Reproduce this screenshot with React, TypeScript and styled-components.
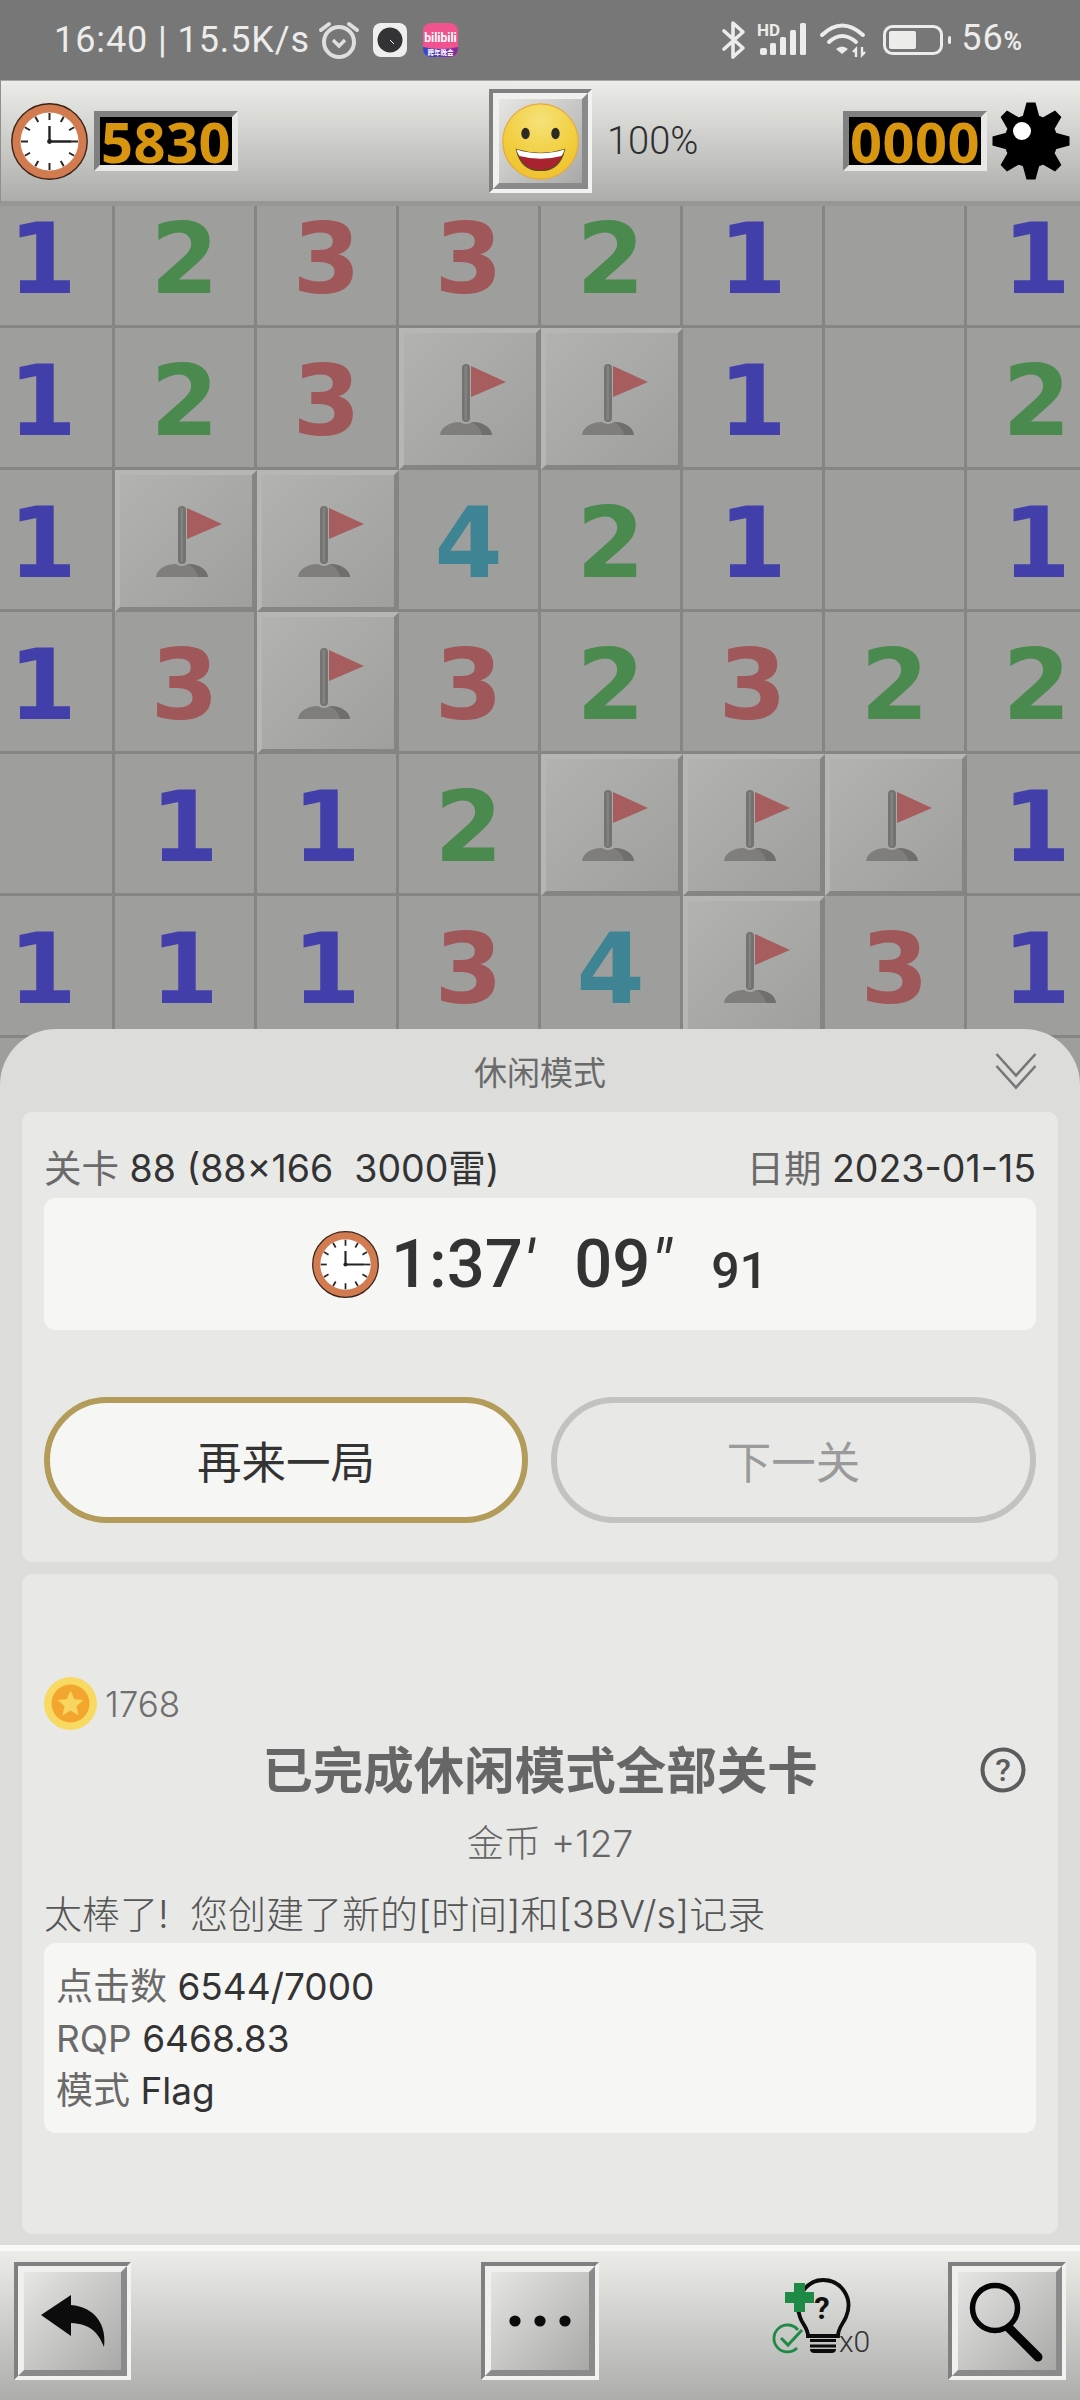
import React from "react";
import styled, { createGlobalStyle } from "styled-components";

const SANS = `Roboto, "Noto Sans CJK SC", "Noto Sans", sans-serif`;
const WIDE = `Inter, "Noto Sans CJK SC", "Noto Sans", sans-serif`;

const Global = createGlobalStyle`
  html, body { margin: 0; padding: 0; background: #777; }
  * { box-sizing: border-box; }
`;

const Page = styled.div`
  width: 1080px;
  height: 2400px;
  display: flex;
  flex-direction: column;
  overflow: hidden;
  font-family: ${SANS};
`;

/* status bar */
const StatusBar = styled.div`
  height: 80px;
  flex: none;
  background: #777777;
  display: flex;
  align-items: center;
  justify-content: space-between;
  padding: 0 57px 0 54px;
  color: #ececea;
`;
const StatusGroup = styled.div`
  display: flex;
  align-items: center;
`;
const StatusText = styled.span<{ $ml?: number }>`
  font-size: 36px;
  font-weight: 400;
  line-height: 40px;
  letter-spacing: 0.9px;
  white-space: pre;
  margin-left: ${(p) => p.$ml ?? 0}px;
`;
const Percent = styled.span`
  font-size: 25px;
  font-weight: 700;
`;
const Icon = styled.svg<{ $ml?: number }>`
  display: block;
  flex: none;
  overflow: visible;
  margin-left: ${(p) => p.$ml ?? 0}px;
`;

/* top toolbar */
const TopBar = styled.div`
  height: 126px;
  flex: none;
  display: grid;
  grid-template-columns: 1fr auto 1fr;
  align-items: center;
  padding: 0 10px;
  background: linear-gradient(180deg, #ecece9 0%, #adadab 100%);
  border-top: 1px solid #a8a8a8;
  border-left: 1px solid #8f8f8f;
  border-bottom: 5px solid #979795;
`;
const BarSide = styled.div`
  display: flex;
  align-items: center;
`;
const Zoom = styled.span`
  margin-left: 15px;
  font-size: 38px;
  font-weight: 300;
  color: #2e2e2e;
  margin-right: auto;
`;
const Counter = styled.div<{ $ml?: number; $mr?: number }>`
  width: 144px;
  height: 60px;
  display: flex;
  align-items: center;
  justify-content: center;
  margin-left: ${(p) => p.$ml ?? 0}px;
  margin-right: ${(p) => p.$mr ?? 0}px;
  border-style: solid;
  border-width: 6px;
  border-color: #808080 #e8e8e6 #e8e8e6 #808080;
  background: #000;
  color: #d8950f;
  font-family: "Open Sans", sans-serif;
  font-weight: 700;
  font-size: 56px;
  line-height: 48px;
  letter-spacing: 0.5px;
  flex: none;
`;
const BevelOuter = styled.div<{ $w: number; $h: number; $ml?: number }>`
  width: ${(p) => p.$w}px;
  height: ${(p) => p.$h}px;
  margin-left: ${(p) => p.$ml ?? 0}px;
  flex: none;
  border-style: solid;
  border-width: 4px;
  border-color: #808080 #f2f2f0 #f2f2f0 #808080;
`;
const BevelInner = styled.div`
  width: 100%;
  height: 100%;
  display: flex;
  align-items: center;
  justify-content: center;
  border-style: solid;
  border-width: 6px;
  border-color: #f0f0ee #8a8a8a #8a8a8a #f0f0ee;
  background: linear-gradient(135deg, #e6e6e4 0%, #a8a8a6 100%);
`;

/* game */
const Game = styled.div`
  position: relative;
  flex: 1;
  min-height: 0;
  overflow: hidden;
  background: #9e9e9c;
`;
const Board = styled.div`
  display: grid;
  grid-template-columns: repeat(8, 142px);
  grid-auto-rows: 142px;
  margin: -20px 0 0 -27px;
  width: 1136px;
`;
const Cell = styled.div<{ $color?: string }>`
  display: flex;
  align-items: center;
  justify-content: center;
  background: #9e9e9c;
  border-right: 3px solid #858583;
  border-bottom: 3px solid #858583;
  color: ${(p) => p.$color ?? "transparent"};
  font-family: "DejaVu Sans", sans-serif;
  font-weight: 700;
  font-size: 98px;
  line-height: 1;
  padding: 6px 0 0 0;
`;
const FlagCell = styled.div`
  display: flex;
  border-style: solid;
  border-width: 5px;
  border-color: #b6b6b4 #858583 #858583 #b6b6b4;
  background: linear-gradient(135deg, #b2b2b0 0%, #9f9f9d 100%);
`;

/* sheet */
const Sheet = styled.div`
  position: absolute;
  top: 823px;
  left: 0;
  right: 0;
  bottom: 0;
  display: flex;
  flex-direction: column;
  padding: 0 22px 11px;
  background: #dcdcda;
  border-radius: 56px 56px 0 0;
`;
const SheetHead = styled.div`
  height: 83px;
  flex: none;
  display: grid;
  grid-template-columns: 1fr auto 1fr;
  align-items: center;
`;
const SheetTitle = styled.div`
  font-size: 33px;
  color: #6a6a6a;
`;
const HeadEnd = styled.div`
  justify-self: end;
  padding-right: 21px;
`;
const Card = styled.div<{ $grow?: boolean; $top: number }>`
  padding: ${(p) => p.$top}px 22px 0;
  background: #e8e8e6;
  border-radius: 10px;
  ${(p) => (p.$grow ? "flex: 1; margin-top: 12px;" : "height: 450px; flex: none;")}
`;
const InfoRow = styled.div`
  height: 62px;
  display: flex;
  align-items: center;
  justify-content: space-between;
  padding-bottom: 4px;
  font-family: ${WIDE};
  font-size: 37.5px;
  color: #333;
  white-space: pre;
`;
const Label = styled.span`
  color: #6a6a6a;
`;
const TimeBox = styled.div`
  height: 132px;
  display: flex;
  align-items: center;
  justify-content: center;
  background: #f6f6f4;
  border-radius: 12px;
  color: #333;
`;
const TimeMain = styled.span<{ $ml?: number }>`
  font-size: 67px;
  font-weight: 500;
  margin-left: ${(p) => p.$ml ?? 0}px;
  line-height: 1;
`;
const Prime = styled.span`
  font-style: italic;
  font-weight: 400;
`;
const TimeSmall = styled.span`
  font-size: 50px;
  font-weight: 500;
  margin-left: 40px;
  padding-top: 14px;
  line-height: 1;
`;
const Actions = styled.div`
  display: grid;
  grid-template-columns: 484px 485px;
  justify-content: space-between;
  margin-top: 67px;
`;
const Pill = styled.button<{ $primary?: boolean }>`
  height: 126px;
  border-radius: 63px;
  border: 6px solid ${(p) => (p.$primary ? "#b39c5a" : "#c2c2c0")};
  background: ${(p) => (p.$primary ? "#f6f6f4" : "#e8e8e6")};
  color: ${(p) => (p.$primary ? "#333" : "#9a9a9a")};
  font-family: ${SANS};
  font-size: 44.5px;
  padding: 0 0 2px;
`;
const CoinRow = styled.div`
  height: 53px;
  display: flex;
  align-items: center;
  gap: 8px;
  font-family: ${WIDE};
  font-size: 35px;
  font-weight: 300;
  color: #6f6f6f;
`;
const ResultRow = styled.div`
  height: 72px;
  display: grid;
  grid-template-columns: 1fr auto 1fr;
  align-items: center;
`;
const ResultTitle = styled.div`
  font-size: 50.5px;
  font-weight: 700;
  color: #666;
  white-space: nowrap;
  padding-bottom: 6px;
`;
const HelpSlot = styled.div`
  justify-self: end;
  padding: 0 10px 1px 0;
`;
const Reward = styled.div`
  height: 82px;
  display: flex;
  align-items: center;
  justify-content: center;
  padding: 0 0 4px 20px;
  font-family: ${WIDE};
  font-size: 37px;
  font-weight: 300;
  color: #666;
  white-space: pre;
`;
const Note = styled.div`
  height: 59px;
  display: flex;
  align-items: center;
  padding-bottom: 5px;
  font-family: ${WIDE};
  font-size: 38px;
  font-weight: 300;
  color: #555;
  white-space: pre;
`;
const Details = styled.div`
  height: 190px;
  padding: 18px 12px 0;
  background: #f6f6f4;
  border-radius: 12px;
  font-family: ${WIDE};
  color: #333;
  font-size: 37px;
`;
const DetailLine = styled.div`
  height: 52px;
  line-height: 52px;
  white-space: pre;
`;

/* bottom */
const BottomBar = styled.div`
  height: 155px;
  flex: none;
  display: flex;
  align-items: flex-start;
  padding: 11px 14px 0;
  border-top: 6px solid #f8f8f6;
  background: linear-gradient(180deg, #ecece9 0%, #adadab 100%);
`;

const ClockIcon = ({ size }: { size: number }) => (
  <Icon width={size} height={size} viewBox="0 0 77 77">
    <circle cx="38.5" cy="38.5" r="37.7" fill="#d27b50" stroke="#3a2418" strokeWidth="1.4" />
    <circle cx="38.5" cy="38.5" r="29" fill="#fff" />
    {Array.from({ length: 12 }, (_, i) => (
      <line
        key={i}
        x1="38.5"
        y1="10"
        x2="38.5"
        y2={i % 3 === 0 ? 17 : 16}
        stroke="#2a2725"
        strokeWidth="2"
        transform={`rotate(${i * 30} 38.5 38.5)`}
      />
    ))}
    <path d="M38.5 23V38.5H60" fill="none" stroke="#222" strokeWidth="2.4" />
    <circle cx="38.5" cy="38.5" r="2.4" fill="#222" />
  </Icon>
);

const SmileIcon = () => (
  <Icon width="77" height="77" viewBox="0 0 77 77">
    <defs>
      <radialGradient id="smile" cx="50%" cy="22%" r="85%">
        <stop offset="0" stopColor="#f6e27a" />
        <stop offset="0.6" stopColor="#f2cd3c" />
        <stop offset="1" stopColor="#eebe2c" />
      </radialGradient>
    </defs>
    <circle cx="38.5" cy="38.5" r="37.7" fill="url(#smile)" stroke="#e6aa40" strokeWidth="1.2" />
    <ellipse cx="23.5" cy="30.5" rx="4.2" ry="5.8" fill="#2c2a22" />
    <ellipse cx="53.5" cy="30.5" rx="4.2" ry="5.8" fill="#2c2a22" />
    <path d="M14.5 46.5Q38.5 54 62.5 46.5Q58 67.5 38.5 67.5Q19 67.5 14.5 46.5Z" fill="#a8232f" stroke="#5d4a22" strokeWidth="1.2" />
    <path d="M14.5 46.5Q38.5 54 62.5 46.5Q61.5 50.5 59.5 53Q38.5 58.5 17.5 53Q15.5 50.5 14.5 46.5Z" fill="#fff" />
  </Icon>
);

const MineIcon = () => (
  <Icon width="78" height="78" viewBox="-39 -39 78 78">
    <circle r="26.5" fill="#000" />
    {Array.from({ length: 8 }, (_, i) => (
      <path key={i} d="M-4.5 -38.5H4.5L9 -22H-9Z" fill="#000" transform={`rotate(${i * 45})`} />
    ))}
    <circle cx="-9" cy="-10" r="9" fill="#fff" />
  </Icon>
);

const Flag = () => (
  <svg width="132" height="132" viewBox="0 0 132 132" style={{ display: "block" }}>
    <rect x="58" y="31" width="8" height="58" rx="4" fill="#737371" />
    <rect x="60.5" y="33" width="2.5" height="54" fill="#828280" />
    <path d="M67 33L102 49L67 64Z" fill="#a75c5e" />
    <path d="M36 102C37 93 47 89 56 89Q62 93 68 89C77 89 87 93 88 102Z" fill="#7f7e7c" />
    <path d="M68 89C77 89 87 93 88 102H78C77 96 73 92 68 89Z" fill="#706f6d" />
  </svg>
);

const colors: Record<string, string> = { "1": "#423faa", "2": "#4a8a4e", "3": "#a05759", "4": "#3f8494" };
const board = ["12332101", "123FF102", "1FF42101", "13F32322", "0112FFF1", "11134F31"];

const Bluetooth = () => (
  <Icon width="25" height="38" viewBox="0 0 25 38">
    <path d="M3 10L22 27L12 36V2L22 11L3 28" fill="none" stroke="#ececea" strokeWidth="3.6" strokeLinejoin="round" strokeLinecap="round" />
  </Icon>
);
const Signal = () => (
  <Icon $ml={11} width="50" height="34" viewBox="0 0 50 34">
    <text x="0" y="12.5" fontFamily="Roboto, sans-serif" fontWeight="700" fontSize="17" fill="#ececea">HD</text>
    <rect x="3" y="25" width="7" height="7" rx="2" fill="#ececea" />
    <rect x="13" y="20" width="6" height="12" rx="1.5" fill="#ececea" />
    <rect x="23" y="14" width="6" height="18" rx="1.5" fill="#ececea" />
    <rect x="33" y="7" width="6" height="25" rx="1.5" fill="#ececea" />
    <rect x="43" y="0" width="6" height="32" rx="1.5" fill="#ececea" />
  </Icon>
);
const Wifi = () => (
  <Icon $ml={13} width="48" height="34" viewBox="0 0 48 34">
    <path d="M2 12Q22 -7 43 12" fill="none" stroke="#ececea" strokeWidth="4" strokeLinecap="round" />
    <path d="M9 19Q22 7 36 19" fill="none" stroke="#ececea" strokeWidth="4" strokeLinecap="round" />
    <path d="M16 26L22 31L28 26Q22 21 16 26Z" fill="#ececea" />
    <path d="M36 34V26L33 29M42 24V32L45 29" fill="none" stroke="#ececea" strokeWidth="2.4" />
  </Icon>
);
const Battery = () => (
  <Icon $ml={15} width="68" height="30" viewBox="0 0 68 30">
    <rect x="1.5" y="1.5" width="57" height="27" rx="8" fill="none" stroke="#ececea" strokeWidth="3" />
    <rect x="6" y="6" width="27" height="18" rx="2" fill="#ececea" />
    <rect x="65" y="11" width="3" height="8" rx="1.5" fill="#ececea" />
  </Icon>
);
const Alarm = () => (
  <Icon $ml={9} width="40" height="38" viewBox="0 0 40 38">
    <circle cx="20" cy="21" r="15" fill="none" stroke="#dedede" strokeWidth="4" />
    <path d="M14 19L20 25L26 19" fill="none" stroke="#dedede" strokeWidth="3.4" />
    <path d="M2 9L10 3M38 9L30 3" stroke="#dedede" strokeWidth="4" strokeLinecap="round" />
  </Icon>
);
const AppDial = () => (
  <Icon $ml={14} width="34" height="34" viewBox="0 0 34 34">
    <rect width="34" height="34" rx="8" fill="#efefef" />
    <circle cx="17" cy="17" r="12.5" fill="#333335" />
    <path d="M17 17L21 21" stroke="#fff" strokeWidth="1" />
  </Icon>
);
const AppBili = () => (
  <Icon $ml={16} width="35" height="34" viewBox="0 0 35 34">
    <defs>
      <linearGradient id="band" x1="0" x2="1" y1="0" y2="0">
        <stop offset="0" stopColor="#2f48c8" />
        <stop offset="1" stopColor="#8c2a96" />
      </linearGradient>
      <clipPath id="biliClip">
        <rect width="35" height="34" rx="8" />
      </clipPath>
    </defs>
    <g clipPath="url(#biliClip)">
      <rect width="35" height="34" fill="#f0538e" />
      <path d="M0 24Q17.5 28 35 24V34H0Z" fill="url(#band)" />
    </g>
    <text x="17.5" y="19" textAnchor="middle" fontFamily="Roboto, sans-serif" fontWeight="700" fontSize="12" fill="#fff">bilibili</text>
    <text x="17.5" y="32" textAnchor="middle" fontFamily="'Noto Sans CJK SC', sans-serif" fontWeight="700" fontSize="6.5" fill="#fff">跨年晚会</text>
  </Icon>
);

const Chevrons = () => (
  <Icon width="42" height="36" viewBox="0 0 42 36">
    <path d="M1.5 1L21 22.5L40.5 1M1.5 13L21 34.5L40.5 13" fill="none" stroke="#777" strokeWidth="2.6" />
  </Icon>
);
const Coin = () => (
  <Icon width="53" height="53" viewBox="0 0 53 53">
    <circle cx="26.5" cy="26.5" r="26.5" fill="#f8da63" />
    <circle cx="26.5" cy="26.5" r="19" fill="#f3a62e" />
    <path d="M26.5 13.5L30.3 22.2L39.5 23L32.5 29.2L34.6 38.5L26.5 33.6L18.4 38.5L20.5 29.2L13.5 23L22.7 22.2Z" fill="#f8d55f" />
  </Icon>
);
const Help = () => (
  <Icon width="46" height="46" viewBox="0 0 46 46">
    <circle cx="23" cy="23" r="20.5" fill="none" stroke="#5c5c5c" strokeWidth="4" />
    <text x="23" y="34" textAnchor="middle" fontFamily="Roboto, sans-serif" fontWeight="500" fontSize="32" fill="#5c5c5c">?</text>
  </Icon>
);
const Undo = () => (
  <Icon width="70" height="58" viewBox="0 0 70 58">
    <path d="M3 23L33 3V13C57 15 69 33 66 55C60 40 52 32 33 31V44Z" fill="#0c0c0c" />
  </Icon>
);
const Dots = () => (
  <Icon width="64" height="14" viewBox="0 0 64 14">
    <circle cx="7" cy="7" r="5.6" fill="#0c0c0c" />
    <circle cx="32" cy="7" r="5.6" fill="#0c0c0c" />
    <circle cx="57" cy="7" r="5.6" fill="#0c0c0c" />
  </Icon>
);
const Magnifier = () => (
  <Icon width="80" height="80" viewBox="0 0 80 80">
    <circle cx="28" cy="27" r="22.5" fill="none" stroke="#050505" strokeWidth="5.5" />
    <path d="M42 47L71 76" stroke="#050505" strokeWidth="9" strokeLinecap="round" />
  </Icon>
);
const Hint = () => (
  <Icon $ml={161} width="120" height="115" viewBox="0 0 120 115">
    <path d="M48 74C48 66 42 62 40 55C33 36 47 18 63 18C81 18 94 36 86 55C83 62 78 66 78 74Z" fill="none" stroke="#0c0c0c" strokeWidth="3.8" />
    <text x="62" y="57" textAnchor="middle" fontFamily="Roboto, sans-serif" fontWeight="700" fontSize="31" fill="#111">?</text>
    <path d="M50 78.5H76M50 84H76" stroke="#0c0c0c" strokeWidth="3" />
    <path d="M50 87H76C76 92 71 91 63 91C55 91 50 92 50 87Z" fill="#0c0c0c" />
    <path d="M34 21H45V30H54V41H45V50H34V41H25V30H34Z" fill="#1f8a45" />
    <path d="M37 86A13.5 13.5 0 1 1 38 68" fill="none" stroke="#1f8a45" strokeWidth="2.8" />
    <path d="M21 76L28 83L42 68" fill="none" stroke="#1f8a45" strokeWidth="3" />
    <text x="79" y="90" fontFamily="Roboto, sans-serif" fontWeight="300" fontSize="30" fill="#333">x0</text>
  </Icon>
);

export default function App() {
  return (
    <Page>
      <Global />
      <StatusBar>
        <StatusGroup>
          <StatusText>16:40 | 15.5K/s</StatusText>
          <Alarm />
          <AppDial />
          <AppBili />
        </StatusGroup>
        <StatusGroup>
          <Bluetooth />
          <Signal />
          <Wifi />
          <Battery />
          <StatusText $ml={10}>
            56<Percent>%</Percent>
          </StatusText>
        </StatusGroup>
      </StatusBar>

      <TopBar>
        <BarSide>
          <ClockIcon size={77} />
          <Counter $ml={6}>5830</Counter>
        </BarSide>
        <BevelOuter $w={103} $h={104}>
          <BevelInner>
            <SmileIcon />
          </BevelInner>
        </BevelOuter>
        <BarSide>
          <Zoom>100%</Zoom>
          <Counter $mr={5}>0000</Counter>
          <MineIcon />
        </BarSide>
      </TopBar>

      <Game>
        <Board>
          {board.flatMap((row, r) =>
            row.split("").map((c, i) =>
              c === "F" ? (
                <FlagCell key={`${r}-${i}`}>
                  <Flag />
                </FlagCell>
              ) : (
                <Cell key={`${r}-${i}`} $color={colors[c]}>
                  {c === "0" ? "" : c}
                </Cell>
              )
            )
          )}
          {Array.from({ length: 8 }, (_, i) => (
            <Cell key={`x-${i}`} />
          ))}
        </Board>

        <Sheet>
          <SheetHead>
            <span />
            <SheetTitle>休闲模式</SheetTitle>
            <HeadEnd>
              <Chevrons />
            </HeadEnd>
          </SheetHead>

          <Card $top={24}>
            <InfoRow>
              <span>
                <Label>关卡</Label> 88 (88×166  3000雷)
              </span>
              <span>
                <Label>日期</Label> 2023-01-15
              </span>
            </InfoRow>
            <TimeBox>
              <ClockIcon size={67} />
              <TimeMain $ml={12}>
                1:37<Prime>′</Prime>
              </TimeMain>
              <TimeMain $ml={40}>
                09<Prime>″</Prime>
              </TimeMain>
              <TimeSmall>91</TimeSmall>
            </TimeBox>
            <Actions>
              <Pill $primary>再来一局</Pill>
              <Pill>下一关</Pill>
            </Actions>
          </Card>

          <Card $grow $top={103}>
            <CoinRow>
              <Coin />
              1768
            </CoinRow>
            <ResultRow>
              <span />
              <ResultTitle>已完成休闲模式全部关卡</ResultTitle>
              <HelpSlot>
                <Help />
              </HelpSlot>
            </ResultRow>
            <Reward>金币 +127</Reward>
            <Note>太棒了!  您创建了新的[时间]和[3BV/s]记录</Note>
            <Details>
              <DetailLine>
                <Label>点击数</Label> 6544/7000
              </DetailLine>
              <DetailLine>
                <Label>RQP</Label> 6468.83
              </DetailLine>
              <DetailLine>
                <Label>模式</Label> Flag
              </DetailLine>
            </Details>
          </Card>
        </Sheet>
      </Game>

      <BottomBar>
        <BevelOuter $w={117} $h={118}>
          <BevelInner>
            <Undo />
          </BevelInner>
        </BevelOuter>
        <BevelOuter $w={118} $h={118} $ml={350}>
          <BevelInner>
            <Dots />
          </BevelInner>
        </BevelOuter>
        <Hint />
        <BevelOuter $w={118} $h={118} $ml={68}>
          <BevelInner>
            <Magnifier />
          </BevelInner>
        </BevelOuter>
      </BottomBar>
    </Page>
  );
}
